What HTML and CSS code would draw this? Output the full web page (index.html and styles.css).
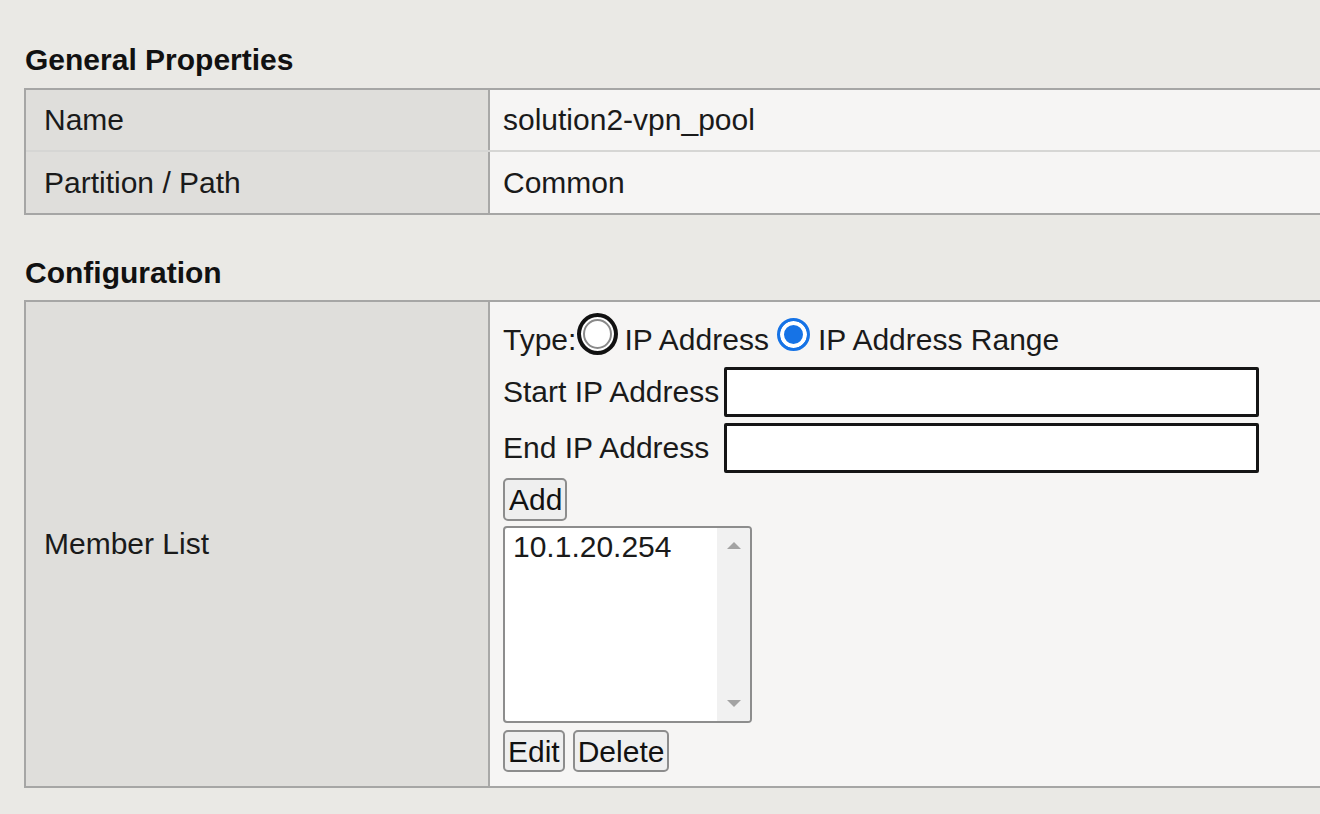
FILE: index.html
```html
<!DOCTYPE html>
<html>
<head>
<meta charset="utf-8">
<title>Pool</title>
<link rel="stylesheet" href="styles.css">
</head>
<body>
<div class="page">
  <h2 class="section-title">General Properties</h2>
  <div class="props">
    <div class="row">
      <div class="label">Name</div>
      <div class="value">solution2-vpn_pool</div>
    </div>
    <div class="row">
      <div class="label">Partition / Path</div>
      <div class="value">Common</div>
    </div>
  </div>

  <h2 class="section-title config-title">Configuration</h2>
  <div class="props">
    <div class="row">
      <div class="label">Member List</div>
      <div class="value member">
        <div class="type-row">
          <span class="txt">Type:</span>
          <span class="radio radio-focus"></span>
          <span class="txt opt1">IP Address</span>
          <span class="radio radio-on"></span>
          <span class="txt opt2">IP Address Range</span>
        </div>
        <div class="field-row">
          <span class="field-label">Start IP Address</span>
          <input class="field" type="text">
        </div>
        <div class="field-row field-row-2">
          <span class="field-label">End IP Address</span>
          <input class="field" type="text">
        </div>
        <button class="btn add-btn">Add</button>
        <div class="listbox">
          <div class="list-items">
            <div class="list-item">10.1.20.254</div>
          </div>
          <div class="scrollbar">
            <span class="arrow-up"></span>
            <span class="arrow-down"></span>
          </div>
        </div>
        <div class="btn-row">
          <button class="btn">Edit</button>
          <button class="btn">Delete</button>
        </div>
      </div>
    </div>
  </div>
</div>
</body>
</html>
```

FILE: styles.css
```css
html, body {
  margin: 0;
  padding: 0;
  background: #eae9e5;
  overflow: hidden;
}

body {
  font-family: "Liberation Sans", Arial, sans-serif;
  font-size: 30px;
  line-height: 34px;
  color: #1a1a1a;
}

.page {
  padding: 43px 0 0 24px;
  width: 1400px;
}

.section-title {
  margin: 0 0 11px 1px;
  font-size: 30px;
  line-height: 34px;
  font-weight: bold;
  color: #111;
}

.config-title {
  margin-top: 41px;
  margin-bottom: 10px;
}

.props {
  width: 1340px;
  border-top: 2px solid #a6a6a5;
  border-bottom: 2px solid #a6a6a5;
  border-left: 2px solid #a6a6a5;
}

.row {
  display: grid;
  grid-template-columns: 464px 1fr;
  min-height: 60px;
}

.row + .row {
  border-top: 2px solid #d6d6d4;
}

.label {
  background: #dfdedb;
  border-right: 2px solid #a8a8a7;
  display: flex;
  align-items: center;
  padding-left: 18px;
}

.value {
  background: #f6f5f4;
  display: flex;
  align-items: center;
  padding-left: 13px;
}

.row + .row .label,
.row + .row .value {
  min-height: 61px;
}

.member {
  display: flex;
  flex-direction: column;
  align-items: flex-start;
  padding: 11px 0 14px 13px;
}

.type-row {
  display: flex;
  align-items: flex-start;
  height: 44px;
}

.txt {
  margin-top: 10px;
  white-space: nowrap;
}

.radio {
  display: block;
  box-sizing: border-box;
  border-radius: 50%;
}

.radio-focus {
  width: 41px;
  height: 42px;
  margin-left: 1px;
  background: #fff;
  border: 4px solid #111;
  box-shadow: inset 0 0 0 2px #fff, inset 0 0 0 4px #8a8a8a;
}

.opt1 {
  margin-left: 6px;
}

.radio-on {
  width: 33px;
  height: 33px;
  margin-top: 5px;
  margin-left: 8px;
  border: 3px solid #1673e6;
  background: #1673e6;
  box-shadow: inset 0 0 0 4px #fff;
}

.opt2 {
  margin-left: 8px;
}

.field-row {
  display: flex;
  align-items: center;
  height: 50px;
  margin-top: 10px;
}

.field-row-2 {
  margin-top: 6px;
}

.field-label {
  width: 221px;
  white-space: nowrap;
}

.field {
  box-sizing: border-box;
  width: 535px;
  height: 50px;
  margin: 0;
  border: 3px solid #151515;
  border-radius: 2px;
  background: #fff;
  padding: 0 6px;
  font: inherit;
  outline: none;
}

.btn {
  box-sizing: border-box;
  height: 43px;
  margin: 0;
  padding: 0 4px;
  background: #efefef;
  border: 2px solid #8d8d8d;
  border-radius: 5px;
  font-family: "Liberation Sans", Arial, sans-serif;
  font-size: 30px;
  line-height: 37px;
  color: #111;
}

.add-btn {
  margin-top: 5px;
  width: 64px;
}

.listbox {
  box-sizing: border-box;
  margin-top: 5px;
  width: 249px;
  height: 197px;
  border: 2px solid #8d8d8d;
  border-radius: 4px;
  background: #fff;
  display: flex;
  overflow: hidden;
}

.list-items {
  flex: 1;
  padding: 2px 0 0 8px;
}

.list-item {
  white-space: nowrap;
}

.scrollbar {
  width: 33px;
  background: #f1f1f1;
  position: relative;
}

.arrow-up,
.arrow-down {
  position: absolute;
  left: 10px;
  width: 0;
  height: 0;
  border-left: 7px solid transparent;
  border-right: 7px solid transparent;
}

.arrow-up {
  top: 14px;
  border-bottom: 7px solid #a3a3a3;
}

.arrow-down {
  bottom: 14px;
  border-top: 7px solid #a3a3a3;
}

.btn-row {
  display: flex;
  gap: 8px;
  margin-top: 7px;
}

.btn-row .btn {
  height: 42px;
  padding: 0 3px;
}
```
